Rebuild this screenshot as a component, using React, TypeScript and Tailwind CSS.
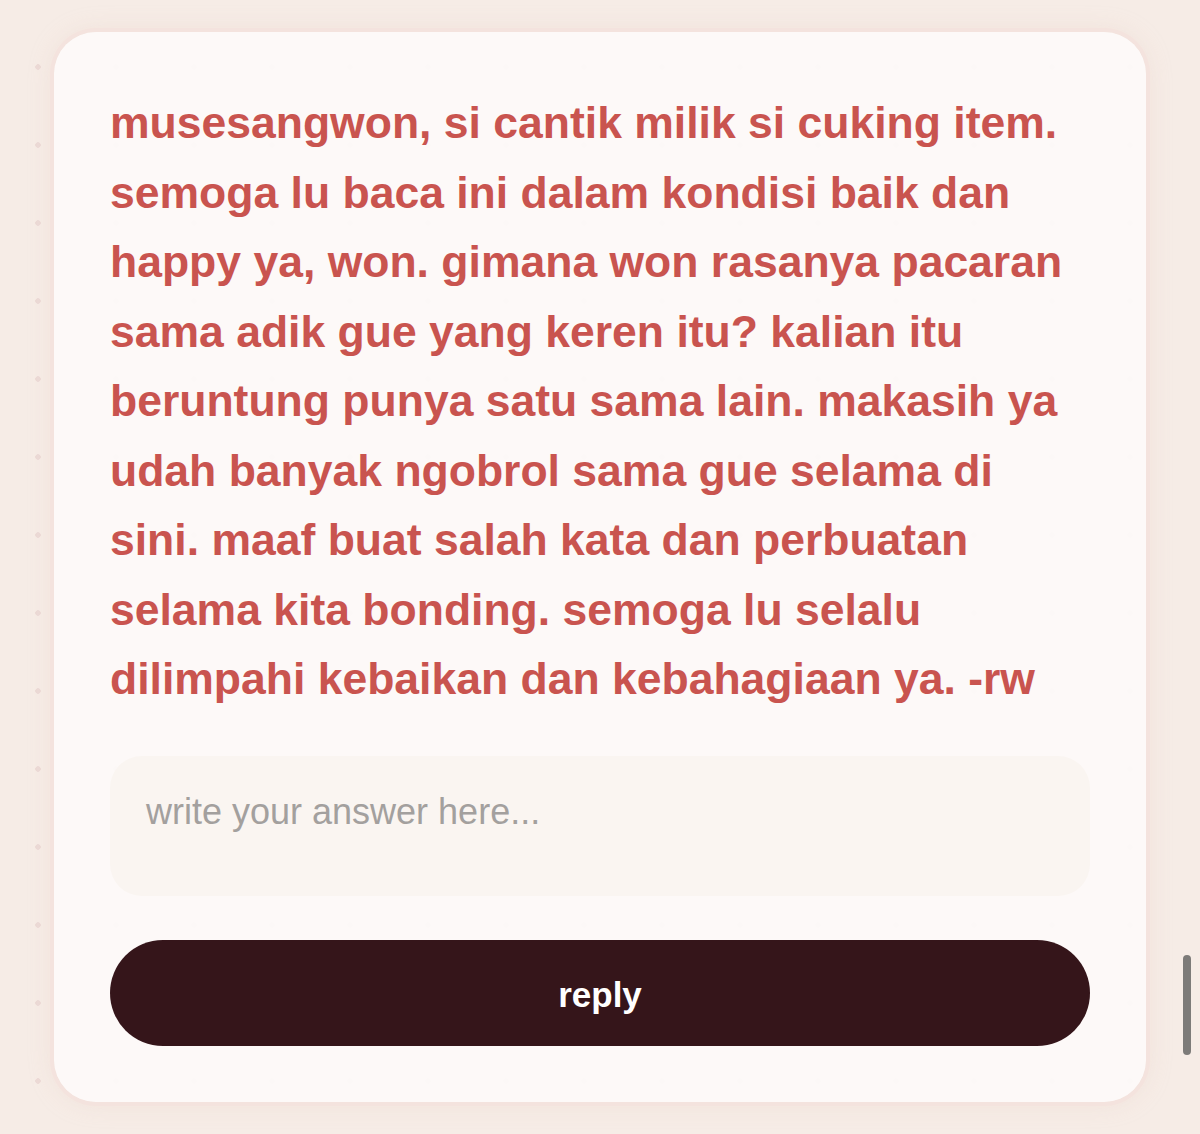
export default function App() {
   return (
      <div
         className="relative min-h-[1134px] w-full overflow-hidden bg-[#f6ece6] bg-[radial-gradient(circle,#ecdad6_2.5px,transparent_3px)] bg-[length:78px_78px] bg-[position:-1px_28px] px-[54px] pt-[32px] pb-[31px]"
         style={{ fontFamily: '"Liberation Sans", Arial, sans-serif' }}
      >
         <div className="rounded-[42px] bg-[#fdfaf9]/95 p-[56px] shadow-[0_0_0_4px_#f4e3de,0_0_24px_rgba(230,200,190,0.35)]">
            <p className="pr-[12px] text-[44.5px] font-bold leading-[69.5px] text-[#c9544f]">
               musesangwon, si cantik milik si cuking item. semoga lu baca ini dalam kondisi baik dan happy ya, won. gimana won rasanya pacaran sama adik gue yang keren itu? kalian itu beruntung punya satu sama lain. makasih ya udah banyak ngobrol sama gue selama di sini. maaf buat salah kata dan perbuatan selama kita bonding. semoga lu selalu dilimpahi kebaikan dan kebahagiaan ya. -rw
            </p>
            <textarea
               className="mt-[42px] block h-[140px] w-full resize-none rounded-[32px] bg-[#faf5f1] px-[36px] pt-[36px] text-[36px] leading-[40px] text-[#3a3a3a] outline-none placeholder:text-[#a3a09e]"
               placeholder="write your answer here..."
            />
            <button
               type="button"
               className="mt-[44px] flex h-[106px] w-full items-center justify-center rounded-full bg-[#35151a] pt-[6px] text-[35px] font-bold text-white"
            >
               reply
            </button>
         </div>
         <div className="absolute right-[9px] top-[955px] h-[100px] w-[8px] rounded-full bg-[#7d7b79]" />
      </div>
   );
}
